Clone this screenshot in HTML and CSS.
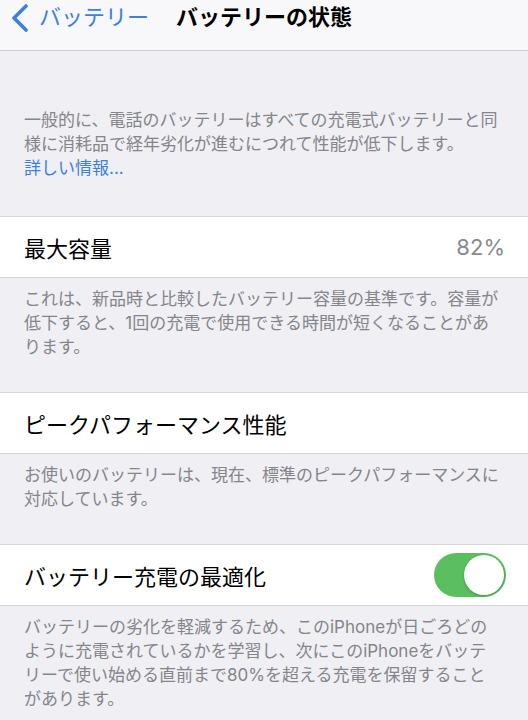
FILE: index.html
```html
<!DOCTYPE html>
<html lang="ja">
<head>
<meta charset="utf-8">
<link rel="stylesheet" href="styles.css">
</head>
<body>
<header class="nav">
  <div class="back">
    <svg class="chev" width="18" height="28" viewBox="0 0 18 28"><path d="M15 2 L3 14 L15 26" fill="none" stroke="#3c7fe0" stroke-width="3.6" stroke-linecap="round" stroke-linejoin="round"/></svg>
    <span class="back-label">バッテリー</span>
  </div>
  <div class="title">バッテリーの状態</div>
</header>
<main>
  <p class="footer first">一般的に、電話のバッテリーはすべての充電式バッテリーと同様に消耗品で経年劣化が進むにつれて性能が低下します。<br><span class="link">詳しい情報...</span></p>
  <div class="row"><span class="label">最大容量</span><span class="value">82%</span></div>
  <p class="footer">これは、新品時と比較したバッテリー容量の基準です。容量が低下すると、1回の充電で使用できる時間が短くなることがあります。</p>
  <div class="row"><span class="label">ピークパフォーマンス性能</span></div>
  <p class="footer">お使いのバッテリーは、現在、標準のピークパフォーマンスに対応しています。</p>
  <div class="row"><span class="label">バッテリー充電の最適化</span><span class="toggle"><span class="knob"></span></span></div>
  <p class="footer">バッテリーの劣化を軽減するため、このiPhoneが日ごろどのように充電されているかを学習し、次にこのiPhoneをバッテリーで使い始める直前まで80%を超える充電を保留することがあります。</p>
</main>
</body>
</html>
```
FILE: styles.css
```css
html, body {
  margin: 0;
  padding: 0;
  background: #efeff4;
  font-family: Inter, "Noto Sans CJK JP", "Noto Sans", sans-serif;
  width: 528px;
  height: 720px;
  overflow: hidden;
}
.nav {
  background: #f8f8fa;
  border-bottom: 1px solid #cfcfd3;
  display: flex;
  align-items: center;
  box-sizing: border-box;
  padding-bottom: 16px;
  height: 51px;
  padding-left: 11px;
}
.back {
  display: flex;
  align-items: center;
  gap: 10px;
  width: 165px;
}
.chev { display: block; margin-top: 2px; }
.back-label {
  color: #3c7fe0;
  font-size: 22px;
  line-height: 28px;
}
.title {
  font-size: 22px;
  font-weight: 700;
  color: #000;
  line-height: 28px;
}
main { display: flex; flex-direction: column; }
.footer {
  margin: 0;
  padding: 9px 28px 33px 24px;
  font-size: 17px;
  line-height: 24px;
  color: #85858a;
}
.footer.first { padding-top: 57px; padding-bottom: 36px; }
.link { color: #3c7fe0; }
.row {
  background: #fff;
  border-top: 1px solid #d6d6da;
  border-bottom: 1px solid #d6d6da;
  height: 60px;
  display: flex;
  align-items: center;
  justify-content: space-between;
  padding: 0 23px 0 24px;
}
.label {
  font-size: 22px;
  color: #000;
}
.value {
  font-size: 22px;
  color: #8a8a8e;
}
.toggle {
  width: 72px;
  height: 44px;
  border-radius: 22px;
  background: #5cbf5f;
  display: flex;
  align-items: center;
  justify-content: flex-end;
  padding-right: 2px;
  box-sizing: border-box;
  margin-right: -1px;
}
.knob {
  width: 40px;
  height: 40px;
  border-radius: 50%;
  background: #fff;
  box-shadow: 0 1px 3px rgba(0,0,0,0.25);
}
```
